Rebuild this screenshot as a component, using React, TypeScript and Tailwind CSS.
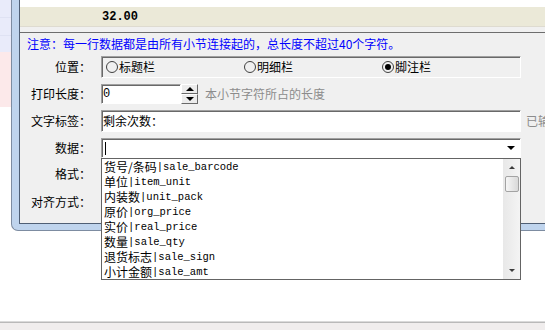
import React from "react";

const cjk = { fontFamily: '"Noto Sans CJK SC", "Noto Sans", sans-serif' };
const mono = { fontFamily: '"Liberation Mono", "DejaVu Sans Mono", monospace' };

const items: [string, string][] = [
  ["货号/条码", "sale_barcode"],
  ["单位", "item_unit"],
  ["内装数", "unit_pack"],
  ["原价", "org_price"],
  ["实价", "real_price"],
  ["数量", "sale_qty"],
  ["退货标志", "sale_sign"],
  ["小计金额", "sale_amt"],
];

const Radio: React.FC<{ label: string; checked?: boolean }> = ({ label, checked }) => (
  <div className="flex items-center w-[139px] h-full">
    <div className="w-[12px] h-[12px] rounded-full border border-[#404040] flex items-center justify-center">
      {checked && <div className="w-[6px] h-[6px] rounded-full bg-black" />}
    </div>
    <span className="ml-[1px] text-[12px] leading-none text-black">{label}</span>
  </div>
);

const Label: React.FC<{ text: string }> = ({ text }) => (
  <div className="w-[72px] shrink-0 text-right text-[12px] leading-none text-black pr-[1px]">{text}</div>
);

const Sunken: React.FC<{ className?: string; children?: React.ReactNode }> = ({ className, children }) => (
  <div
    className={`border border-t-[#a0a0a0] border-l-[#a0a0a0] border-b-white border-r-white shadow-[inset_1px_1px_0_#696969] ${className ?? ""}`}
  >
    {children}
  </div>
);

const App: React.FC = () => {
  return (
    <div className="relative w-[545px] h-[330px] overflow-hidden bg-white flex flex-col" style={cjk}>
      <div className="flex h-[231px] shrink-0">
        {/* strip of the window behind */}
        <div className="w-[11px] shrink-0 flex flex-col">
          <div className="h-[18px] bg-[#e9ebfa] border-b border-[#dfe2f3]" />
          <div className="h-[18px] bg-[#e9ebfa] border-b border-[#dfe2f3]" />
          <div className="h-[16px] bg-[#e9ebfa]" />
          <div className="h-[55px] bg-[#fce9ea]" />
          <div className="flex-1 bg-white" />
        </div>

        {/* dialog frame */}
        <div className="flex-1 border-l border-b border-[#7d8ca1] rounded-bl-[7px] bg-[#bfd4ed] pl-[7px] pb-[6px]">
          <div className="h-[224px] border-l border-b border-[#4f5f75] bg-[#f0f0f0] flex flex-col">
            <div className="h-[7px] bg-white" />
            <div className="h-[19px] bg-[#ebe9d8] flex items-center pl-[82px]">
              <span className="text-[12px] font-bold text-black" style={mono}>32.00</span>
            </div>
            <div className="h-[1px] bg-[#dedbd0]" />
            <div className="h-[5px] bg-[#f0f0f0]" />
            <div className="flex-1 border-t border-[#6d6d6d] flex flex-col">
              <div className="mt-[3px] h-[16px] pl-[7px] text-[12px] leading-[16px] text-[#0000ff] whitespace-nowrap">
                注意：每一行数据都是由所有小节连接起的，总长度不超过40个字符。
              </div>

              <div className="mt-[4px] h-[22px] flex items-center">
                <Label text="位置：" />
                <Sunken className="ml-[9px] w-[420px] h-[22px] flex items-center pl-[4px]">
                  <Radio label="标题栏" />
                  <Radio label="明细栏" />
                  <Radio label="脚注栏" checked />
                </Sunken>
              </div>

              <div className="mt-[6px] h-[20px] flex items-center">
                <Label text="打印长度：" />
                <Sunken className="ml-[9px] w-[80px] h-[20px] bg-white flex items-center pl-[1px]">
                  <span className="text-[12px] leading-none" style={mono}>0</span>
                </Sunken>
                <div className="w-[17px] h-[20px] flex flex-col">
                  <div className="flex-1 bg-[#ececec] border border-t-white border-l-white border-b-[#696969] border-r-[#696969] flex items-center justify-center">
                    <div className="w-0 h-0 border-l-[4px] border-r-[4px] border-b-[4px] border-l-transparent border-r-transparent border-b-black" />
                  </div>
                  <div className="flex-1 bg-[#ececec] border border-t-white border-l-white border-b-[#696969] border-r-[#696969] flex items-center justify-center">
                    <div className="w-0 h-0 border-l-[4px] border-r-[4px] border-t-[4px] border-l-transparent border-r-transparent border-t-black" />
                  </div>
                </div>
                <span className="ml-[7px] text-[12px] leading-none text-[#8c8c8c] whitespace-nowrap">本小节字符所占的长度</span>
              </div>

              <div className="mt-[6px] h-[22px] flex items-center">
                <Label text="文字标签：" />
                <Sunken className="ml-[9px] w-[420px] h-[22px] bg-white flex items-center pl-[1px] shrink-0">
                  <span className="text-[12px] leading-none">剩余次数：</span>
                </Sunken>
                <span className="ml-[5px] text-[12px] leading-none text-[#8c8c8c] whitespace-nowrap">已输入0个字符</span>
              </div>

              <div className="mt-[6px] h-[20px] flex items-center">
                <Label text="数据：" />
                <Sunken className="ml-[9px] w-[420px] h-[20px] bg-white flex items-center shrink-0">
                  <div className="ml-[3px] w-[1px] h-[13px] bg-black" />
                  <div className="ml-auto mr-[1px] w-[16px] h-[17px] flex items-center justify-center">
                    <div className="w-0 h-0 border-l-[4px] border-r-[4px] border-t-[4px] border-l-transparent border-r-transparent border-t-black" />
                  </div>
                </Sunken>
              </div>

              <div className="mt-[6px] h-[20px] flex items-center">
                <Label text="格式：" />
              </div>

              <div className="mt-[8px] h-[20px] flex items-center">
                <Label text="对齐方式：" />
              </div>
            </div>
          </div>
        </div>
      </div>

      <div className="flex-1 bg-white" />

      <div className="h-[9px] shrink-0 border-t border-[#dadada] bg-[#f0eded] overflow-hidden">
        <div className="border-t border-[#b9b9b9] pl-[1px] pt-[3px]">
          <span className="text-[12px] font-bold leading-[12px] text-black tracking-[1px]" style={mono}>1000000</span>
        </div>
      </div>

      {/* open dropdown list */}
      <div className="absolute left-[101px] top-[158px] w-[420px] h-[122px] border border-[#646464] bg-white flex">
        <div className="flex-1 flex flex-col">
          {items.map(([name, code], index) => (
            <div key={index} className="h-[15px] flex items-center pl-[2px] whitespace-nowrap text-black">
              <span className="text-[12px] leading-[12px]">{name}</span>
              <span className="text-[10.5px] leading-[12px]" style={mono}>|{code}</span>
            </div>
          ))}
        </div>
        <div className="w-[17px] bg-gradient-to-r from-[#e8e8e8] to-[#f4f4f4] flex flex-col items-center">
          <div className="h-[17px] flex items-center justify-center">
            <div className="w-0 h-0 border-l-[3px] border-r-[3px] border-b-[3px] border-l-transparent border-r-transparent border-b-[#3c3c3c]" />
          </div>
          <div className="w-[14px] h-[16px] rounded-[2px] border border-[#a3a3a3] bg-gradient-to-r from-[#f6f6f6] to-[#d9d9d9]" />
          <div className="flex-1" />
          <div className="h-[17px] flex items-center justify-center">
            <div className="w-0 h-0 border-l-[3px] border-r-[3px] border-t-[3px] border-l-transparent border-r-transparent border-t-[#3c3c3c]" />
          </div>
        </div>
      </div>
    </div>
  );
};

export default App;
